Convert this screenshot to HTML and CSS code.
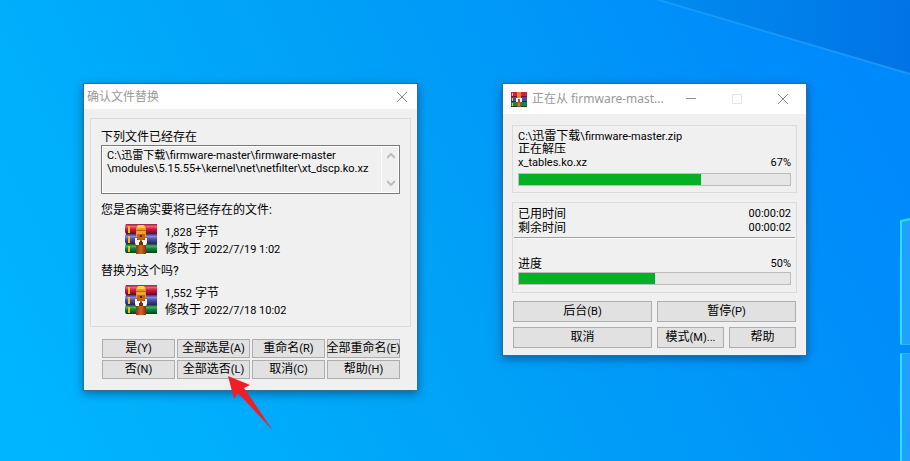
FILE: index.html
```html
<!DOCTYPE html>
<html lang="zh-CN">
<head>
<meta charset="utf-8">
<title>WinRAR</title>
<link rel="stylesheet" href="styles.css">
</head>
<body>
<svg class="defs" aria-hidden="true">
  <defs>
    <linearGradient id="red" x2="0" y2="1"><stop offset="0" stop-color="#9e1a3c"/><stop offset=".25" stop-color="#e8607f"/><stop offset=".5" stop-color="#cf1c43"/><stop offset="1" stop-color="#6a0820"/></linearGradient>
    <linearGradient id="blue" x2="0" y2="1"><stop offset="0" stop-color="#3c3990"/><stop offset=".25" stop-color="#8287d8"/><stop offset=".5" stop-color="#4e50ae"/><stop offset="1" stop-color="#25225f"/></linearGradient>
    <linearGradient id="green" x2="0" y2="1"><stop offset="0" stop-color="#0b5a28"/><stop offset=".25" stop-color="#4fae68"/><stop offset=".5" stop-color="#10843a"/><stop offset="1" stop-color="#06401c"/></linearGradient>
    <linearGradient id="strap"><stop offset="0" stop-color="#8e3508"/><stop offset=".5" stop-color="#cf6a22"/><stop offset="1" stop-color="#84300a"/></linearGradient>
    <symbol id="archive" viewBox="0 0 32 30">
      <path fill="url(#red)" d="M1 0h31v10H1l-1-2V2z"/>
      <path fill="url(#blue)" d="M1 10h31v10H1l-1-2v-6z"/>
      <path fill="url(#green)" d="M1 20h31v9H1l-1-2v-5z"/>
      <path fill="#f5bd16" d="M3 2h2v7H3zM3 12h2v7H3zM3 22h2v6H3z"/>
      <path fill="url(#strap)" d="M11 13h10v17H11z"/>
      <path fill="#e79a1c" d="M11 4l2-3h6l2 3v8l-1 3h-8l-1-3z"/>
      <path fill="#ffd648" d="M13 1h6l1 3h-8z"/>
      <path fill="#b96518" d="M11 6h10v1H11z"/>
      <path fill="#f0a338" d="M12 7h8v3h-8z"/>
      <path fill="#c66413" d="M12 10h8v5h-8z"/>
      <path fill="#3b2010" d="M15 11h2v2h-2z"/>
      <path fill="#fff" d="M10 14h2v2h2v5h-3l-1-2zM20 14h2v5l-1 2h-3v-5h2z"/>
      <path fill="#7b2c0a" d="M14 17h4v4h-4z"/>
      <path fill="#fff" d="M14 16h1v2h-1zM17 16h1v2h-1z"/>
    </symbol>
    <symbol id="archive-small" viewBox="0 0 16 15">
      <path fill="#c62446" d="M0 0h16v5H0z"/><path fill="#4c4da8" d="M0 5h16v5H0z"/><path fill="#168742" d="M0 10h16v5H0z"/>
      <path fill="#6f1634" d="M0 4h16v1H0z"/><path fill="#25245e" d="M0 9h16v1H0z"/><path fill="#064a24" d="M0 14h16v1H0z"/>
      <path fill="#f5c525" d="M1 1h1v3H1zM1 6h1v3H1zM1 11h1v3H1z"/>
      <path fill="#ef7d22" d="M6 0h4v6H6z"/><path fill="#b64a18" d="M6 6h4v9H6z"/>
      <path fill="#fff" d="M5 6h6v4H9V7H7v3H5z"/>
      <path fill="#d87832" d="M7 11h2v3H7z"/>
    </symbol>
  </defs>
</svg>

<main class="desktop">
  <svg class="wallpaper" viewBox="0 0 910 461" preserveAspectRatio="none" aria-hidden="true">
    <defs>
      <linearGradient id="sky" gradientUnits="userSpaceOnUse" x1="60" y1="461" x2="840" y2="60"><stop offset="0" stop-color="#00b5ff"/><stop offset=".5" stop-color="#00a0f7"/><stop offset="1" stop-color="#0089fb"/></linearGradient>
      <linearGradient id="dusk" gradientUnits="userSpaceOnUse" x1="655" y1="0" x2="910" y2="20"><stop offset="0" stop-color="#008cf0"/><stop offset="1" stop-color="#0074e6"/></linearGradient>
      <linearGradient id="ray" gradientUnits="userSpaceOnUse" x1="655" y1="0" x2="910" y2="74"><stop offset="0" stop-color="#139cf8"/><stop offset="1" stop-color="#1a95ff"/></linearGradient>
    </defs>
    <path fill="url(#sky)" d="M0 0h910v461H0z"/>
    <path fill="url(#dusk)" d="M655 0h255v74z"/>
    <path fill="none" stroke="url(#ray)" stroke-width="2" d="M655-1L910 74"/>
    <path fill="#1ea2fc" d="M900 221l10-2v125h-10zM900 353h10v108h-10z"/>
    <path fill="none" stroke="#2ae1ff" stroke-width="2" d="M901 344V221l9-2M901 461V353"/>
    <path fill="none" stroke="#24b8fb" d="M900 344.500h10M900 353.500h10"/>
  </svg>

  <section class="window confirm" aria-label="确认文件替换">
    <header class="titlebar">
      <h1>确认文件替换</h1>
      <button class="caption" aria-label="关闭"><svg width="12" height="12" viewBox="0 0 12 12"><path d="M1 1l10 10M11 1L1 11"/></svg></button>
    </header>
    <div class="group question">
      <label for="path">下列文件已经存在</label>
      <div class="pathbox">
        <textarea id="path" readonly>C:\迅雷下载\firmware-master\firmware-master
\modules\5.15.55+\kernel\net\netfilter\xt_dscp.ko.xz</textarea>
        <div class="scroll">
          <button aria-label="向上"><svg width="8" height="6" viewBox="0 0 8 6"><path d="M0 5l4-4 4 4"/></svg></button>
          <button aria-label="向下"><svg width="8" height="6" viewBox="0 0 8 6"><path d="M0 1l4 4 4-4"/></svg></button>
        </div>
      </div>
      <p>您是否确实要将已经存在的文件:</p>
      <div class="file">
        <svg class="book"><use href="#archive"/></svg>
        <div><p><span class="latin">1,828</span> 字节</p><p>修改于 <span class="latin">2022/7/19 1:02</span></p></div>
      </div>
      <p>替换为这个吗?</p>
      <div class="file">
        <svg class="book"><use href="#archive"/></svg>
        <div><p><span class="latin">1,552</span> 字节</p><p>修改于 <span class="latin">2022/7/18 10:02</span></p></div>
      </div>
    </div>
    <div class="choices">
      <button>是<span class="latin">(Y)</span></button>
      <button>全部选是<span class="latin">(A)</span></button>
      <button>重命名<span class="latin">(R)</span></button>
      <button>全部重命名<span class="latin">(E)</span></button>
      <button>否<span class="latin">(N)</span></button>
      <button>全部选否<span class="latin">(L)</span></button>
      <button>取消<span class="latin">(C)</span></button>
      <button>帮助<span class="latin">(H)</span></button>
    </div>
  </section>

  <section class="window extract" aria-label="正在解压">
    <header class="titlebar">
      <svg class="appicon"><use href="#archive-small"/></svg>
      <h1>正在从 firmware-mast...</h1>
      <button class="caption" aria-label="最小化"><svg width="12" height="12" viewBox="0 0 12 12"><path d="M1 5.500h10"/></svg></button>
      <button class="caption" aria-label="最大化" disabled><svg width="12" height="12" viewBox="0 0 12 12"><path d="M1.500 1.500h9v9h-9z"/></svg></button>
      <button class="caption" aria-label="关闭"><svg width="12" height="12" viewBox="0 0 12 12"><path d="M1 1l10 10M11 1L1 11"/></svg></button>
    </header>
    <div class="group current">
      <p><span class="latin">C:\</span>迅雷下载<span class="latin">\firmware-master.zip</span></p>
      <p>正在解压</p>
      <p class="row"><label class="latin" for="file-progress">x_tables.ko.xz</label><span class="latin">67%</span></p>
      <progress id="file-progress" max="100" value="67">67%</progress>
    </div>
    <div class="group total">
      <p class="row"><span>已用时间</span><span class="latin">00:00:02</span></p>
      <p class="row"><span>剩余时间</span><span class="latin">00:00:02</span></p>
      <hr>
      <p class="row"><label for="total-progress">进度</label><span class="latin">50%</span></p>
      <progress id="total-progress" max="100" value="50">50%</progress>
    </div>
    <div class="actions">
      <button class="wide">后台<span class="latin">(B)</span></button>
      <button class="wide">暂停<span class="latin">(P)</span></button>
      <button class="wide">取消</button>
      <button>模式<span class="latin">(M)...</span></button>
      <button>帮助</button>
    </div>
  </section>

  <svg class="pointer" viewBox="0 0 46 56" aria-hidden="true"><path fill="#f21d25" d="M0 0l22 9-6 3 29 42.500L10 17l-4 6z"/></svg>
</main>
</body>
</html>
```
FILE: styles.css
```css
* { box-sizing: border-box; }

body {
  margin: 0;
  color: #000;
  font: 12px/14px Roboto, "Noto Sans CJK SC", sans-serif;
}

h1, p { margin: 0; }

button { font: inherit; color: inherit; }

.defs { position: absolute; width: 0; height: 0; }

.latin { font-size: 11px; }

.desktop {
  position: relative;
  min-height: 100vh;
  overflow: hidden;
  background: #009ff7;
}

.wallpaper { position: absolute; inset: 0; width: 100%; height: 100%; }

.window {
  position: absolute;
  top: 83px;
  background: #f0f0f0;
  border: 1px solid #2c6f9b;
  box-shadow: 0 3px 9px rgba(0, 30, 70, .45);
}

.confirm { left: 83px; width: 335px; padding-bottom: 11px; }
.extract { left: 502px; width: 305px; padding-bottom: 7px; }

.titlebar {
  display: flex;
  align-items: center;
  height: 25px;
  background: #fff;
}

.titlebar h1 {
  flex: 1;
  overflow: hidden;
  color: #999;
  font: 12px/18px "Noto Sans", "Noto Sans CJK SC", sans-serif;
  white-space: nowrap;
}

.confirm .titlebar { padding-left: 3px; }
.extract .titlebar { height: 30px; padding-left: 8px; }
.appicon { width: 16px; height: 15px; margin-right: 5px; }

.caption {
  display: grid;
  place-items: center;
  width: 46px;
  height: 25px;
  padding: 0;
  background: none;
  border: 0;
}

.confirm .caption { width: 30px; }
.caption svg, .scroll svg { fill: none; stroke: #8c8c8c; }
.caption:disabled svg { stroke: #e4e4e4; }

.group { border: 1px solid #dcdcdc; }

.question { margin: 9px 6px 12px; padding: 11px 10px 1px; }
.question > label { display: block; }

.pathbox {
  display: flex;
  height: 49px;
  margin: 1px 0 9px;
  border: 1px solid #7a7a7a;
  box-shadow: inset 0 0 0 1px #fff;
}

.pathbox textarea {
  flex: 1;
  min-width: 0;
  padding: 3px 0 0 5px;
  overflow: hidden;
  background: none;
  border: 0;
  outline: 0;
  resize: none;
  font: inherit;
  font-size: 11px;
  line-height: 13px;
  white-space: pre;
}

.scroll {
  display: flex;
  flex-direction: column;
  justify-content: space-between;
  width: 18px;
  padding: 4px 0;
  border-left: 1px solid #fff;
}

.scroll button { height: 12px; padding: 0; background: none; border: 0; line-height: 0; }
.scroll svg { stroke: #bdbdbd; stroke-width: 2; }

.file { display: flex; gap: 8px; height: 47px; padding: 7px 0 0 24px; }
.file p { line-height: 17px; }
.book { width: 32px; height: 30px; }

.choices {
  display: grid;
  grid-template-columns: repeat(4, 1fr);
  gap: 2px;
  margin: 0 17px 0 18px;
}

.choices button, .actions button {
  display: flex;
  align-items: center;
  justify-content: center;
  min-width: 0;
  height: 19px;
  padding: 0;
  background: #e1e1e1;
  border: 1px solid #adadad;
  line-height: 17px;
  white-space: nowrap;
}

.current { margin: 11px 9px 9px; padding: 4px 5px 6px; }
.current p { line-height: 13px; }
.total { margin: 0 9px 8px; padding: 4px 5px 7px; }
.row { display: flex; justify-content: space-between; }

progress {
  display: block;
  width: 100%;
  height: 13px;
  appearance: none;
  background: #e6e6e6;
  border: 1px solid #bcbcbc;
}

progress::-webkit-progress-bar { background: #e6e6e6; }
progress::-webkit-progress-value { background: #06b025; }

.current progress { margin-top: 4px; }
.total progress { margin-top: 1px; }

hr {
  height: 2px;
  margin: 2px -4px 18px;
  border: 0;
  border-top: 1px solid #a0a0a0;
  border-bottom: 1px solid #fff;
}

.actions {
  display: grid;
  grid-template-columns: repeat(4, 1fr);
  gap: 5px;
  margin: 0 10px;
}

.actions button { height: 21px; line-height: 19px; }
.actions .wide { grid-column: span 2; }

.pointer { position: absolute; left: 228px; top: 376px; width: 46px; height: 56px; }
```
